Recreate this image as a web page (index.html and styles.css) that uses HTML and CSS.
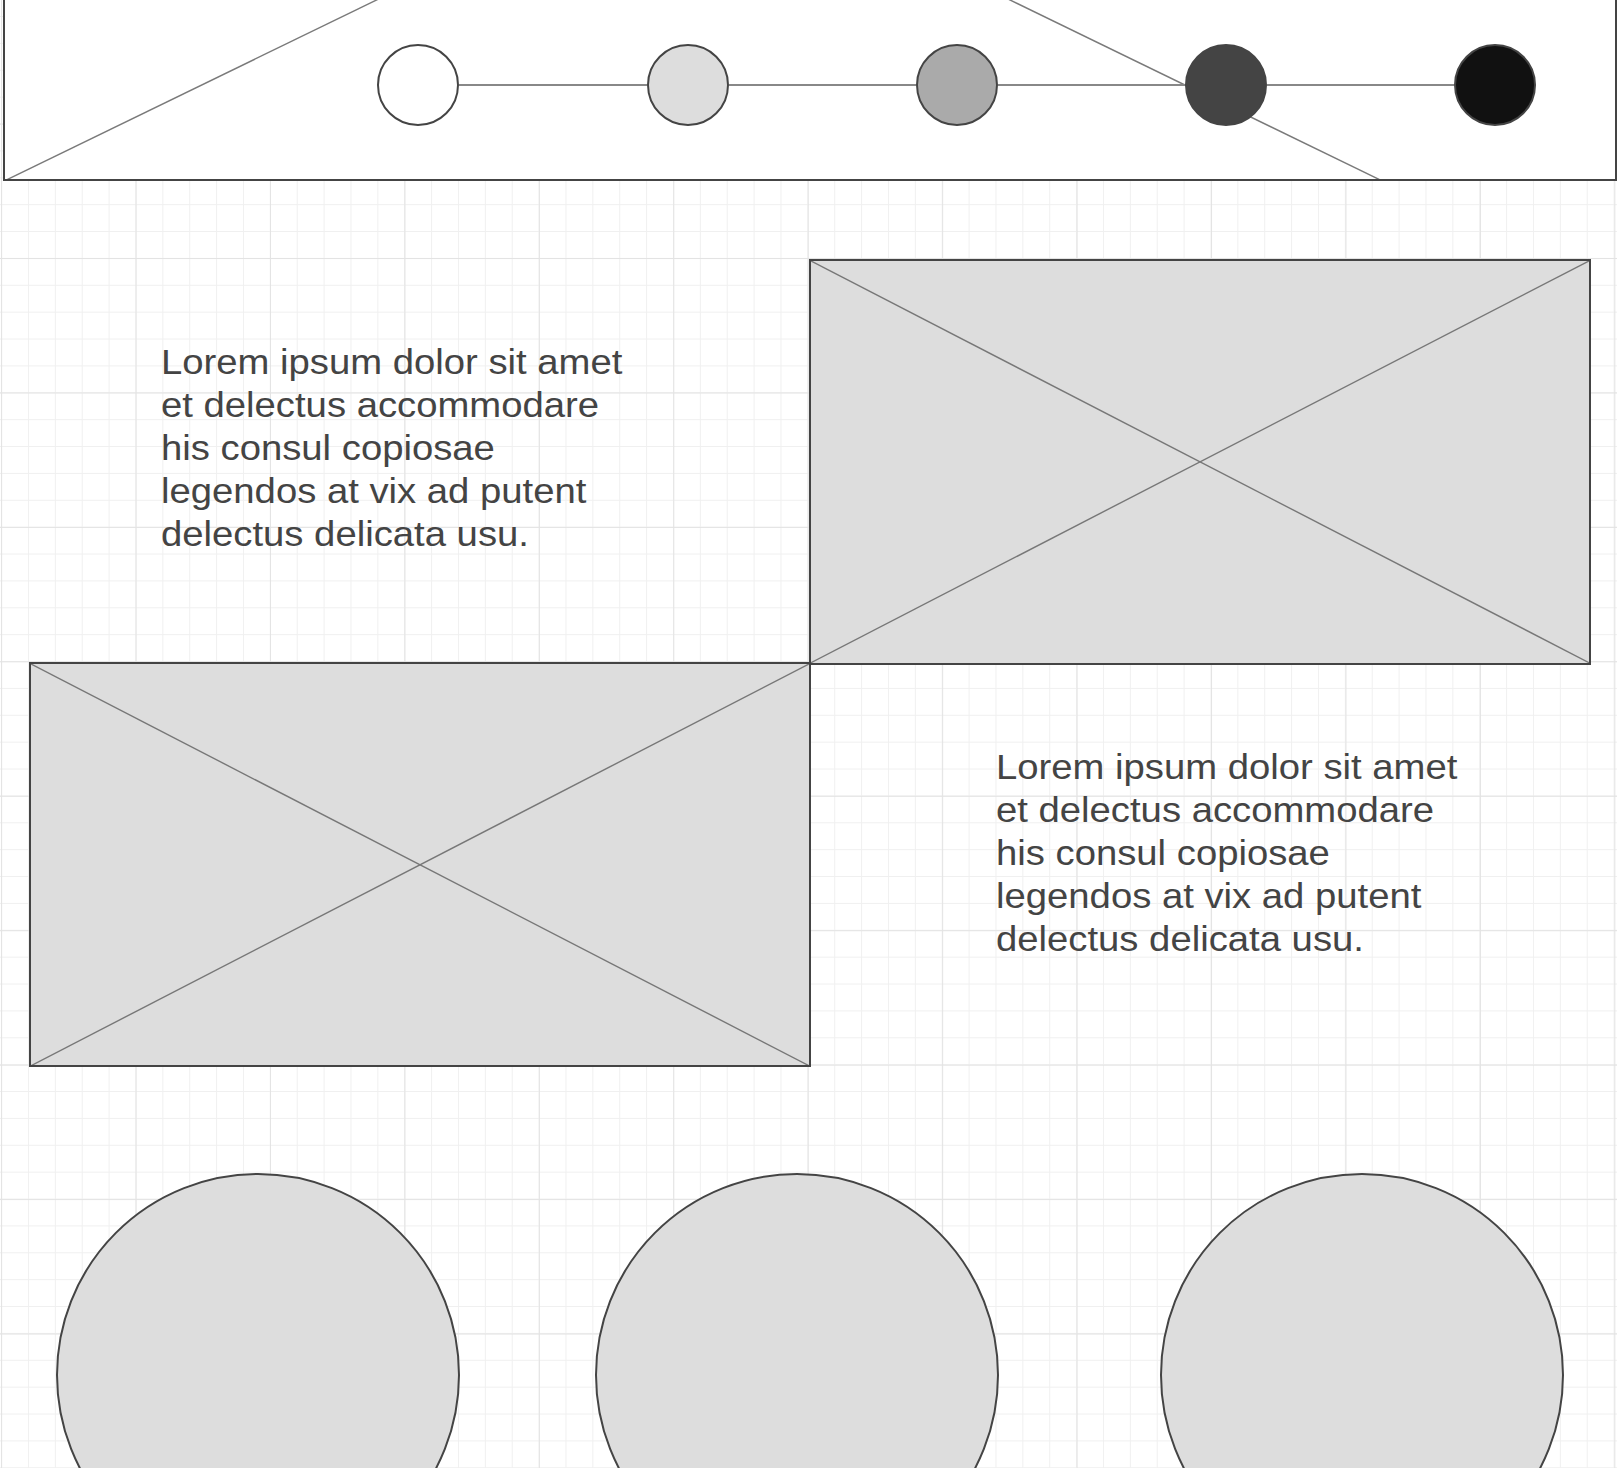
FILE: index.html
```html
<!DOCTYPE html>
<html lang="en">
<head>
<meta charset="utf-8">
<title>Wireframe</title>
<link rel="stylesheet" href="styles.css">
</head>
<body>
<div class="canvas">
  <header class="header">
    <svg class="header-x" width="1610" height="179" viewBox="0 0 1610 179" aria-hidden="true">
      <line x1="1.3" y1="180" x2="1375.3" y2="-488"/>
      <line x1="1.3" y1="-488" x2="1375.3" y2="180"/>
    </svg>
    <div class="stepper">
      <span class="step step-1"></span>
      <span class="link"></span>
      <span class="step step-2"></span>
      <span class="link"></span>
      <span class="step step-3"></span>
      <span class="link"></span>
      <span class="step step-4"></span>
      <span class="link"></span>
      <span class="step step-5"></span>
    </div>
  </header>

  <section class="row row-1">
    <div class="copy copy-1">
      <p class="copy-text">Lorem ipsum dolor sit amet<br>et delectus accommodare<br>his consul copiosae<br>legendos at vix ad putent<br>delectus delicata usu.</p>
    </div>
    <div class="placeholder">
      <svg viewBox="0 0 100 100" preserveAspectRatio="none" aria-hidden="true">
        <line x1="0" y1="0" x2="100" y2="100"/>
        <line x1="0" y1="100" x2="100" y2="0"/>
      </svg>
    </div>
  </section>

  <section class="row row-2">
    <span class="spacer"></span>
    <div class="placeholder">
      <svg viewBox="0 0 100 100" preserveAspectRatio="none" aria-hidden="true">
        <line x1="0" y1="0" x2="100" y2="100"/>
        <line x1="0" y1="100" x2="100" y2="0"/>
      </svg>
    </div>
    <div class="copy copy-2">
      <p class="copy-text">Lorem ipsum dolor sit amet<br>et delectus accommodare<br>his consul copiosae<br>legendos at vix ad putent<br>delectus delicata usu.</p>
    </div>
  </section>

  <section class="row row-3">
    <div class="disc disc-1"></div>
    <div class="disc disc-2"></div>
    <div class="disc disc-3"></div>
  </section>
</div>
</body>
</html>
```

FILE: styles.css
```css
html, body {
  margin: 0;
  padding: 0;
  background: #ffffff;
  overflow: hidden;
}

.canvas {
  width: 1617px;
  height: 1468px;
  overflow: hidden;
  background-color: #ffffff;
  background-image:
    linear-gradient(to right, #e3e3e3 1px, transparent 1px),
    linear-gradient(to bottom, #e3e3e3 1px, transparent 1px),
    linear-gradient(to right, #f0f0f0 1px, transparent 1px),
    linear-gradient(to bottom, #f0f0f0 1px, transparent 1px);
  background-size: 134.45px 134.45px, 134.45px 134.45px, 26.89px 26.89px, 26.89px 26.89px;
  background-position: 1.1px 123.6px, 1.1px 123.6px, 1.1px 16.04px, 1.1px 16.04px;
  font-family: "Liberation Sans", Arial, Helvetica, sans-serif;
  color: #444444;
}

/* ---------- header with stepper ---------- */
.header {
  position: relative;
  box-sizing: border-box;
  margin-left: 2.7px;
  width: 1614px;
  height: 181px;
  border: 2px solid #444444;
  border-top: none;
  background: #ffffff;
  overflow: hidden;
}

.header-x {
  position: absolute;
  left: 0;
  top: 0;
  overflow: hidden;
}

.header-x line {
  stroke: #7a7a7a;
  stroke-width: 1.4;
}

.stepper {
  position: relative;
  z-index: 1;
  display: flex;
  align-items: center;
  padding-top: 44px;
  padding-left: 372.8px;
}

.step {
  box-sizing: border-box;
  width: 82px;
  height: 82px;
  border: 2px solid #444444;
  border-radius: 50%;
  flex: none;
}

.step-1 { background: #ffffff; }
.step-2 { background: #dddddd; }
.step-3 { background: #aaaaaa; }
.step-4 { background: #444444; }
.step-5 { background: #111111; }

.link {
  width: 187.25px;
  height: 2px;
  background: #888888;
  flex: none;
}

/* ---------- content rows ---------- */
.row {
  display: flex;
  align-items: flex-start;
}

.row-1 {
  margin-top: 78.3px;
}

.row-2 {
  margin-top: -3.3px;
}

.row-3 {
  margin-top: 106px;
  padding-left: 56px;
}

.copy {
  box-sizing: border-box;
  flex: none;
}

.copy-text {
  display: inline-block;
  margin: 0;
  font-size: 35.4px;
  line-height: 42.9px;
  white-space: nowrap;
  transform: scaleX(1.081);
  transform-origin: 0 0;
}

.copy-1 {
  width: 809.3px;
  padding-left: 161.2px;
  padding-top: 82px;
}

.copy-2 {
  padding-left: 185.8px;
  padding-top: 84.8px;
}

.spacer {
  width: 28.7px;
  flex: none;
}

.placeholder {
  box-sizing: border-box;
  width: 782px;
  height: 405.7px;
  border: 2px solid #444444;
  background: #dddddd;
  flex: none;
}

.placeholder svg {
  display: block;
  width: 100%;
  height: 100%;
}

.placeholder line {
  stroke: #777777;
  stroke-width: 1.4;
  vector-effect: non-scaling-stroke;
}

.disc {
  box-sizing: border-box;
  width: 404px;
  height: 404px;
  border: 2px solid #444444;
  border-radius: 50%;
  background: #dddddd;
  flex: none;
}

.disc-2 { margin-left: 135px; }
.disc-3 { margin-left: 160.7px; }
```
